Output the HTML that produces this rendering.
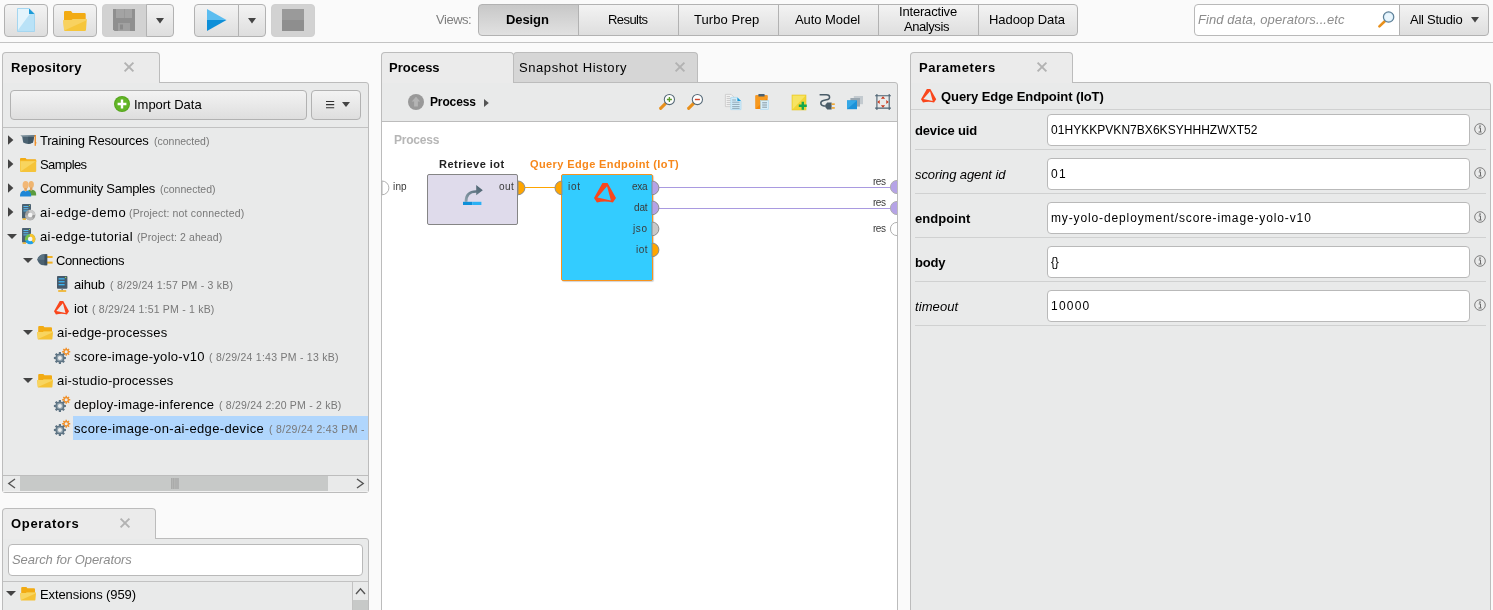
<!DOCTYPE html>
<html>
<head>
<meta charset="utf-8">
<title>AI Studio</title>
<style>
*{box-sizing:border-box;margin:0;padding:0}
html,body{width:1493px;height:610px;overflow:hidden;background:#fafafa}
body{position:relative;font-family:"Liberation Sans",sans-serif;font-size:13px;color:#000}
.abs{position:absolute}
.t{position:absolute;white-space:pre;line-height:16px;height:16px;will-change:transform}
.btn{position:absolute;border:1px solid #b2b2b2;border-radius:4px;background:linear-gradient(#f3f3f3,#dedede)}
.btn.dis{background:#d2d2d2;border-color:#d0d0d0}
.btn.sel{background:linear-gradient(#c8c8c8,#e1e1e1)}
.tab{position:absolute;background:#ebebeb;border:1px solid #bcbcbc;border-bottom:none;border-radius:4px 4px 0 0}
.tab.un{background:#d6d6d6}
.panel{position:absolute;background:#e9eaea;border:1px solid #bcbcbc;border-radius:0 3px 3px 3px}
.inp{position:absolute;background:#fff;border:1px solid #b9b9b9;border-radius:4px}
.sep{position:absolute;height:1px;background:#d0d1d1}
svg{position:absolute;overflow:visible}
</style>
</head>
<body>
<!-- TOP TOOLBAR -->
<div class="abs" style="left:0;top:42px;width:1493px;height:1px;background:#c3c3c3"></div>
<div class="btn" style="left:4px;top:4px;width:44px;height:33px"></div>
<div class="btn" style="left:53px;top:4px;width:44px;height:33px"></div>
<div class="btn dis" style="left:102px;top:4px;width:45px;height:33px;border-radius:4px 0 0 4px"></div>
<div class="btn" style="left:146px;top:4px;width:28px;height:33px;border-radius:0 4px 4px 0"></div>
<div class="btn" style="left:194px;top:4px;width:45px;height:33px;border-radius:4px 0 0 4px"></div>
<div class="btn" style="left:238px;top:4px;width:28px;height:33px;border-radius:0 4px 4px 0"></div>
<div class="btn dis" style="left:271px;top:4px;width:44px;height:33px"></div>
<svg style="left:17px;top:8px" width="18" height="24" viewBox="0 0 18 24"><path d="M0.5 0.5H12L17.5 6V23.5H0.5Z" fill="#b9e2f7" stroke="#a5d6f0" stroke-width="1"/><path d="M1 1H12L13.5 5L1 22Z" fill="#e3f4fc"/><path d="M12 0.5L17.5 6H12Z" fill="#1b9ad6"/></svg>
<svg style="left:63px;top:11px" width="24" height="20" viewBox="0 0 24 20"><path d="M1 1.2Q1 0 2.2 0H8L9.5 2H21.5Q22.7 2 22.7 3.2V12H1Z" fill="#f2ab13"/><path d="M0.3 10.2Q0 9 1.2 9H8.5L10 8H22.8Q24 8 23.7 9.2L23 18.8Q23 20 21.8 20H2.2Q1 20 1 18.8Z" fill="#f6c63c"/><path d="M0.3 10.2Q0 9 1.2 9H8.5L10 8H22.8Q24 8 23.7 9.2L1.2 19.5Z" fill="#f8d260"/></svg>
<svg style="left:113px;top:9px" width="22" height="22" viewBox="0 0 22 22"><path d="M0 0H22V22H1.5L0 20.5Z" fill="#8f8f8f"/><rect x="3" y="0" width="16" height="9" fill="#a3a3a3"/><rect x="11" y="0" width="1" height="9" fill="#999"/><rect x="5" y="14" width="12" height="8" fill="#a0a0a0"/><rect x="7" y="15.5" width="3" height="5" fill="#8a8a8a"/></svg>
<svg style="left:156px;top:18px" width="8" height="6" viewBox="0 0 8 6"><path d="M0 0H8L4 5.5Z" fill="#444"/></svg>
<svg style="left:207px;top:9px" width="20" height="22" viewBox="0 0 20 22"><path d="M0 0L19.5 11H0Z" fill="#5bbdf0"/><path d="M0 11H19.5L0 22Z" fill="#0e8fd8"/></svg>
<svg style="left:248px;top:18px" width="8" height="6" viewBox="0 0 8 6"><path d="M0 0H8L4 5.5Z" fill="#444"/></svg>
<svg style="left:282px;top:9px" width="22" height="22" viewBox="0 0 22 22"><rect width="22" height="11" fill="#9a9a9a"/><rect y="11" width="22" height="11" fill="#8e8e8e"/></svg>
<!-- VIEWS -->
<div class="btn sel" style="left:478px;top:4px;width:101px;height:32px;border-radius:4px 0 0 4px"></div>
<div class="btn" style="left:578px;top:4px;width:101px;height:32px;border-radius:0"></div>
<div class="btn" style="left:678px;top:4px;width:101px;height:32px;border-radius:0"></div>
<div class="btn" style="left:778px;top:4px;width:101px;height:32px;border-radius:0"></div>
<div class="btn" style="left:878px;top:4px;width:101px;height:32px;border-radius:0"></div>
<div class="btn" style="left:978px;top:4px;width:100px;height:32px;border-radius:0 4px 4px 0"></div>
<!-- SEARCH -->
<div class="inp" style="left:1194px;top:4px;width:206px;height:32px;border-radius:4px 0 0 4px"></div>
<div class="btn" style="left:1399px;top:4px;width:90px;height:32px;border-radius:0 4px 4px 0"></div>
<svg style="left:1471px;top:17px" width="8" height="6" viewBox="0 0 8 6"><path d="M0 0H8L4 5.5Z" fill="#444"/></svg>
<svg style="left:1378px;top:11.4px" width="17" height="17" viewBox="0 0 17 17"><path d="M6.8 10.2L1.4 15.4" stroke="#e8901c" stroke-width="2.6" stroke-linecap="round"/><circle cx="10.6" cy="6" r="5.2" fill="#d8eefb" stroke="#5d7f96" stroke-width="1.2"/><circle cx="10.6" cy="6" r="3.6" fill="#eaf6fd"/></svg>
<!-- REPOSITORY -->
<div class="panel" style="left:2px;top:82px;width:367px;height:411px;"></div>
<div class="tab" style="left:2px;top:52px;width:158px;height:31px;"></div>
<svg style="left:124px;top:62px" width="10" height="10" viewBox="0 0 10 10"><path d="M0.6 0.6L9.4 9.4M9.4 0.6L0.6 9.4" stroke="#b2b2b2" stroke-width="1.9" fill="none"/></svg>
<div class="btn" style="left:10px;top:90px;width:297px;height:30px;"></div>
<div class="btn" style="left:311px;top:90px;width:50px;height:30px;"></div>
<svg style="left:114px;top:96px" width="16" height="16" viewBox="0 0 16 16"><circle cx="8" cy="8" r="8" fill="#55a51c"/><circle cx="8" cy="8" r="7" fill="#62b526"/><path d="M8 3.6V12.4M3.6 8H12.4" stroke="#fff" stroke-width="2.4"/></svg>
<svg style="left:326px;top:101px" width="9" height="8" viewBox="0 0 9 8"><path d="M0 0.5H8.2M0 3.6H8.2M0 6.7H8.2" stroke="#333" stroke-width="1.1"/></svg>
<svg style="left:342px;top:102px" width="8" height="5" viewBox="0 0 8 5"><path d="M0 0H8L4 5Z" fill="#444"/></svg>
<div class="sep" style="left:3px;top:127px;width:365px;height:1px;background:#c2c2c2;"></div>
<div class="abs" style="left:73px;top:416px;width:295px;height:24px;background:#b0d6fd;"></div>
<svg style="left:7.7px;top:135px" width="6" height="10" viewBox="0 0 6 10"><path d="M0 0.2L5.4 5L0 9.8Z" fill="#444"/></svg>
<svg style="left:7.7px;top:159px" width="6" height="10" viewBox="0 0 6 10"><path d="M0 0.2L5.4 5L0 9.8Z" fill="#444"/></svg>
<svg style="left:7.7px;top:183px" width="6" height="10" viewBox="0 0 6 10"><path d="M0 0.2L5.4 5L0 9.8Z" fill="#444"/></svg>
<svg style="left:7.7px;top:207px" width="6" height="10" viewBox="0 0 6 10"><path d="M0 0.2L5.4 5L0 9.8Z" fill="#444"/></svg>
<svg style="left:19.8px;top:135px" width="17" height="11" viewBox="0 0 17 11"><path d="M0.3 0.6L16 0L14.6 1.8H2.2Z" fill="#5d7684"/><path d="M2.2 1.8H14L13 7.6Q8 10.2 3.2 7.6Z" fill="#4b6271"/><path d="M8.2 1.8H14L13 7.6Q10.6 8.8 8.2 9Z" fill="#3e5462"/><rect x="14.6" y="0" width="1.3" height="10.8" fill="#f08a1c"/><rect x="15.4" y="7" width="0.9" height="1.6" fill="#f08a1c"/></svg>
<svg style="left:19.8px;top:158px" width="17" height="14" viewBox="0 0 17 14"><path d="M0 1Q0 0 1 0H5.6L6.6 1.3H15.2Q16.2 1.3 16.2 2.3V4H0Z" fill="#f2ab13"/><path d="M0 2.6H16.2V13Q16.2 14 15.2 14H1Q0 14 0 13Z" fill="#f5c43a"/><path d="M0.6 3.2H15.6L0.6 13.4Z" fill="#f8d55f"/></svg>
<svg style="left:19.8px;top:181px" width="17" height="16" viewBox="0 0 17 16"><ellipse cx="11.2" cy="3.6" rx="2.7" ry="3.5" fill="#efb570"/><path d="M6.8 14.6Q6.4 9.6 9.6 8.8L11.2 9.6L12.8 8.8Q16.4 9.6 16.2 14.6Z" fill="#5b9b3e"/><rect x="10" y="6.4" width="2.4" height="2.8" fill="#e0a05c"/><ellipse cx="5.6" cy="4" rx="3" ry="3.9" fill="#f2b877"/><rect x="4.3" y="7" width="2.6" height="3" fill="#e3a463"/><path d="M0 15.4Q-0.2 10.6 3.6 9.4L5.6 10.4L7.6 9.4Q11.4 10.6 11.2 15.4Z" fill="#1e87d6"/></svg>
<svg style="left:19.9px;top:204px" width="16" height="17" viewBox="0 0 16 17"><rect x="2" y="0" width="9" height="14.6" rx="0.8" fill="#4b6171"/><rect x="3.4" y="2" width="5" height="1" fill="#58b8ec"/><rect x="3.4" y="4.2" width="5" height="1" fill="#58b8ec"/><rect x="3.4" y="6.4" width="5" height="1" fill="#58b8ec"/><rect x="9" y="1" width="1" height="1" fill="#8fd14f"/><rect x="2.6" y="14.4" width="3.4" height="1.4" fill="#f0b020"/><circle cx="10.2" cy="11" r="5.2" fill="#9d9d9d"/><path d="M10.2 11L15.399999999999999 11A5.2 5.2 0 0 0 8.6 6.05Z" fill="#c9c9c9"/><path d="M10.2 11L4.999999999999999 11.5A5.2 5.2 0 0 0 13.84 14.692Z" fill="#b5b5b5"/><circle cx="10.2" cy="11" r="2.3" fill="#f4f4f4"/></svg>
<svg style="left:6.5px;top:233.5px" width="10" height="5" viewBox="0 0 10 5"><path d="M0 0H10L5 5Z" fill="#444"/></svg>
<svg style="left:19.9px;top:228px" width="16" height="17" viewBox="0 0 16 17"><rect x="2" y="0" width="9" height="14.6" rx="0.8" fill="#4b6171"/><rect x="3.4" y="2" width="5" height="1" fill="#58b8ec"/><rect x="3.4" y="4.2" width="5" height="1" fill="#58b8ec"/><rect x="3.4" y="6.4" width="5" height="1" fill="#58b8ec"/><rect x="9" y="1" width="1" height="1" fill="#8fd14f"/><rect x="2.6" y="14.4" width="3.4" height="1.4" fill="#f0b020"/><circle cx="10.2" cy="11" r="5.2" fill="#1ea0e6"/><path d="M10.2 11L9.32 5.88A5.2 5.2 0 0 1 13.53 15.00Z" fill="#f7c42e"/><path d="M10.2 11L9.32 5.88A5.2 5.2 0 0 0 5.31 12.77Z" fill="#78c043"/><circle cx="10.2" cy="11" r="2.3" fill="#f4f4f4"/></svg>
<svg style="left:22.8px;top:257.5px" width="10" height="5" viewBox="0 0 10 5"><path d="M0 0H10L5 5Z" fill="#444"/></svg>
<svg style="left:37.2px;top:254.3px" width="16" height="12" viewBox="0 0 16 12"><rect x="9" y="2" width="6.6" height="2" fill="#f0b020"/><rect x="9" y="7.6" width="6.6" height="2" fill="#f0b020"/><path d="M10.2 0.3V11.3H6.6Q2.2 11.3 0.2 5.8Q2.2 0.3 6.6 0.3Z" fill="#4b6171"/><path d="M7.4 0.3H10.2V11.3H7.4Z" fill="#3c505e"/><path d="M0.2 5.8Q2.2 0.3 6.6 0.3H7.4V5.8Z" fill="#5a7282"/></svg>
<svg style="left:56.9px;top:276.1px" width="11" height="16" viewBox="0 0 11 16"><rect x="0" y="0" width="10.4" height="12.8" rx="0.8" fill="#46596a"/><rect x="1.6" y="2.2" width="6" height="1.3" fill="#3db5f2"/><rect x="1.6" y="5.1" width="6" height="1.3" fill="#3db5f2"/><rect x="1.6" y="8" width="6" height="1.3" fill="#3db5f2"/><rect x="8" y="0.9" width="1.2" height="1.2" fill="#8fd14f"/><rect x="4.4" y="12.8" width="1.6" height="1.6" fill="#7a8a96"/><rect x="1.2" y="14.2" width="8" height="1.6" fill="#f0b020"/></svg>
<svg style="left:54.2px;top:301.3px" width="16" height="14" viewBox="0 0 16 14"><path d="M5.78 0.00L9.22 0.00L15.00 10.34L12.86 13.40Q7.50 12.06 1.98 13.40L0.00 10.34ZM8.89 2.21L2.31 10.01L11.54 12.05Z" fill="#f9461c" fill-rule="evenodd"/></svg>
<svg style="left:23px;top:329.5px" width="10" height="5" viewBox="0 0 10 5"><path d="M0 0H10L5 5Z" fill="#444"/></svg>
<svg style="left:37.1px;top:326px" width="17" height="14" viewBox="0 0 17 14"><path d="M1.2 1Q1.2 0 2.2 0H6.4L7.4 1.3H14Q15 1.3 15 2.3V8H1.2Z" fill="#f2ab13"/><path d="M0.2 6.8Q0 6 0.9 6H5.8L6.8 5.4H15.2Q16.2 5.4 16 6.3L15.4 12.7Q15.3 13.6 14.4 13.6H1.7Q0.8 13.6 0.7 12.7Z" fill="#f5c235"/><path d="M0.2 6.8Q0 6 0.9 6H5.8L6.8 5.4H15.2Q16.2 5.4 16 6.3L1 13Z" fill="#f8d560"/></svg>
<svg style="left:53.9px;top:348px" width="17" height="17" viewBox="0 0 17 17"><path d="M16.24 3.08L16.24 4.52L15.01 4.53L14.70 5.27L15.56 6.14L14.54 7.16L13.67 6.30L12.93 6.61L12.92 7.84L11.48 7.84L11.47 6.61L10.73 6.30L9.86 7.16L8.84 6.14L9.70 5.27L9.39 4.53L8.16 4.52L8.16 3.08L9.39 3.07L9.70 2.33L8.84 1.46L9.86 0.44L10.73 1.30L11.47 0.99L11.48 -0.24L12.92 -0.24L12.93 0.99L13.67 1.30L14.54 0.44L15.56 1.46L14.70 2.33L15.01 3.07Z" fill="#f0902a"/><circle cx="12.2" cy="3.8" r="1.5" fill="#e9eaea"/><path d="M11.91 8.93L11.91 11.07L10.25 11.14L9.78 12.28L10.90 13.49L9.39 15.00L8.18 13.88L7.04 14.35L6.97 16.01L4.83 16.01L4.76 14.35L3.62 13.88L2.41 15.00L0.90 13.49L2.02 12.28L1.55 11.14L-0.11 11.07L-0.11 8.93L1.55 8.86L2.02 7.72L0.90 6.51L2.41 5.00L3.62 6.12L4.76 5.65L4.83 3.99L6.97 3.99L7.04 5.65L8.18 6.12L9.39 5.00L10.90 6.51L9.78 7.72L10.25 8.86Z" fill="#5d7383"/><circle cx="5.9" cy="10" r="3.2" fill="#8ea0ac"/><circle cx="5.9" cy="10" r="2" fill="#e9eaea"/></svg>
<svg style="left:23px;top:377.5px" width="10" height="5" viewBox="0 0 10 5"><path d="M0 0H10L5 5Z" fill="#444"/></svg>
<svg style="left:37.1px;top:374px" width="17" height="14" viewBox="0 0 17 14"><path d="M1.2 1Q1.2 0 2.2 0H6.4L7.4 1.3H14Q15 1.3 15 2.3V8H1.2Z" fill="#f2ab13"/><path d="M0.2 6.8Q0 6 0.9 6H5.8L6.8 5.4H15.2Q16.2 5.4 16 6.3L15.4 12.7Q15.3 13.6 14.4 13.6H1.7Q0.8 13.6 0.7 12.7Z" fill="#f5c235"/><path d="M0.2 6.8Q0 6 0.9 6H5.8L6.8 5.4H15.2Q16.2 5.4 16 6.3L1 13Z" fill="#f8d560"/></svg>
<svg style="left:53.9px;top:396px" width="17" height="17" viewBox="0 0 17 17"><path d="M16.24 3.08L16.24 4.52L15.01 4.53L14.70 5.27L15.56 6.14L14.54 7.16L13.67 6.30L12.93 6.61L12.92 7.84L11.48 7.84L11.47 6.61L10.73 6.30L9.86 7.16L8.84 6.14L9.70 5.27L9.39 4.53L8.16 4.52L8.16 3.08L9.39 3.07L9.70 2.33L8.84 1.46L9.86 0.44L10.73 1.30L11.47 0.99L11.48 -0.24L12.92 -0.24L12.93 0.99L13.67 1.30L14.54 0.44L15.56 1.46L14.70 2.33L15.01 3.07Z" fill="#f0902a"/><circle cx="12.2" cy="3.8" r="1.5" fill="#e9eaea"/><path d="M11.91 8.93L11.91 11.07L10.25 11.14L9.78 12.28L10.90 13.49L9.39 15.00L8.18 13.88L7.04 14.35L6.97 16.01L4.83 16.01L4.76 14.35L3.62 13.88L2.41 15.00L0.90 13.49L2.02 12.28L1.55 11.14L-0.11 11.07L-0.11 8.93L1.55 8.86L2.02 7.72L0.90 6.51L2.41 5.00L3.62 6.12L4.76 5.65L4.83 3.99L6.97 3.99L7.04 5.65L8.18 6.12L9.39 5.00L10.90 6.51L9.78 7.72L10.25 8.86Z" fill="#5d7383"/><circle cx="5.9" cy="10" r="3.2" fill="#8ea0ac"/><circle cx="5.9" cy="10" r="2" fill="#e9eaea"/></svg>
<svg style="left:53.9px;top:420px" width="17" height="17" viewBox="0 0 17 17"><path d="M16.24 3.08L16.24 4.52L15.01 4.53L14.70 5.27L15.56 6.14L14.54 7.16L13.67 6.30L12.93 6.61L12.92 7.84L11.48 7.84L11.47 6.61L10.73 6.30L9.86 7.16L8.84 6.14L9.70 5.27L9.39 4.53L8.16 4.52L8.16 3.08L9.39 3.07L9.70 2.33L8.84 1.46L9.86 0.44L10.73 1.30L11.47 0.99L11.48 -0.24L12.92 -0.24L12.93 0.99L13.67 1.30L14.54 0.44L15.56 1.46L14.70 2.33L15.01 3.07Z" fill="#f0902a"/><circle cx="12.2" cy="3.8" r="1.5" fill="#e9eaea"/><path d="M11.91 8.93L11.91 11.07L10.25 11.14L9.78 12.28L10.90 13.49L9.39 15.00L8.18 13.88L7.04 14.35L6.97 16.01L4.83 16.01L4.76 14.35L3.62 13.88L2.41 15.00L0.90 13.49L2.02 12.28L1.55 11.14L-0.11 11.07L-0.11 8.93L1.55 8.86L2.02 7.72L0.90 6.51L2.41 5.00L3.62 6.12L4.76 5.65L4.83 3.99L6.97 3.99L7.04 5.65L8.18 6.12L9.39 5.00L10.90 6.51L9.78 7.72L10.25 8.86Z" fill="#5d7383"/><circle cx="5.9" cy="10" r="3.2" fill="#8ea0ac"/><circle cx="5.9" cy="10" r="2" fill="#e9eaea"/></svg>
<div class="abs" style="left:3px;top:475px;width:365px;height:1px;background:#bdbdbd;"></div>
<div class="abs" style="left:20px;top:476px;width:308px;height:15px;background:#c7c9c8;"></div>
<div class="abs" style="left:3px;top:491px;width:365px;height:1px;background:#f2f2f2;"></div>
<svg style="left:8.4px;top:479px" width="8" height="9" viewBox="0 0 8 9"><path d="M7 0L0.8 4.5L7 9" stroke="#555" stroke-width="1.4" fill="none"/></svg>
<svg style="left:355.5px;top:479px" width="8" height="9" viewBox="0 0 8 9"><path d="M1 0L7.2 4.5L1 9" stroke="#555" stroke-width="1.4" fill="none"/></svg>
<svg style="left:171px;top:478px" width="8" height="11" viewBox="0 0 8 11"><path d="M0.9 0V11M2.9 0V11M5 0V11M7 0V11" stroke="#979797" stroke-width="1"/></svg>
<!-- OPERATORS -->
<div class="panel" style="left:2px;top:538px;width:367px;height:80px;"></div>
<div class="tab" style="left:2px;top:508px;width:154px;height:31px;"></div>
<svg style="left:120px;top:518px" width="10" height="10" viewBox="0 0 10 10"><path d="M0.6 0.6L9.4 9.4M9.4 0.6L0.6 9.4" stroke="#b2b2b2" stroke-width="1.9" fill="none"/></svg>
<div class="inp" style="left:8px;top:544px;width:355px;height:32px;"></div>
<div class="sep" style="left:3px;top:581px;width:365px;height:1px;background:#c2c2c2;"></div>
<div class="abs" style="left:352px;top:582px;width:1px;height:30px;background:#c2c2c2;"></div>
<div class="abs" style="left:353px;top:600px;width:15px;height:12px;background:#c7c9c8;"></div>
<svg style="left:6.1px;top:590.7px" width="10" height="5" viewBox="0 0 10 5"><path d="M0 0H10L5 5Z" fill="#444"/></svg>
<svg style="left:20px;top:587px" width="17" height="14" viewBox="0 0 17 14"><path d="M1.2 1Q1.2 0 2.2 0H6.4L7.4 1.3H14Q15 1.3 15 2.3V8H1.2Z" fill="#f2ab13"/><path d="M0.2 6.8Q0 6 0.9 6H5.8L6.8 5.4H15.2Q16.2 5.4 16 6.3L15.4 12.7Q15.3 13.6 14.4 13.6H1.7Q0.8 13.6 0.7 12.7Z" fill="#f5c235"/><path d="M0.2 6.8Q0 6 0.9 6H5.8L6.8 5.4H15.2Q16.2 5.4 16 6.3L1 13Z" fill="#f8d560"/></svg>
<svg style="left:356px;top:588px" width="9" height="7" viewBox="0 0 9 7"><path d="M0 6L4.5 0.8L9 6" stroke="#555" stroke-width="1.4" fill="none"/></svg>
<!-- PROCESS -->
<div class="panel" style="left:381px;top:82px;width:517px;height:540px;"></div>
<div class="tab un" style="left:513px;top:52px;width:185px;height:30px;"></div>
<div class="tab" style="left:381px;top:52px;width:133px;height:31px;"></div>
<svg style="left:675px;top:62px" width="10" height="10" viewBox="0 0 10 10"><path d="M0.6 0.6L9.4 9.4M9.4 0.6L0.6 9.4" stroke="#b2b2b2" stroke-width="1.9" fill="none"/></svg>
<div class="abs" style="left:382px;top:121px;width:515px;height:1px;background:#bcbcbc;"></div>
<div class="abs" style="left:382px;top:122px;width:515px;height:490px;background:#fff;"></div>
<svg style="left:408px;top:94px" width="16" height="16" viewBox="0 0 16 16"><circle cx="8" cy="8" r="8" fill="#999"/><path d="M8 2.8L12.2 7.4H9.9V12.6H6.1V7.4H3.8Z" fill="#b4b4b4"/></svg>
<svg style="left:484px;top:99px" width="5" height="8" viewBox="0 0 5 8"><path d="M0 0L4.8 4L0 8Z" fill="#555"/></svg>
<svg style="left:659.2px;top:94px" width="16" height="16" viewBox="0 0 16 16"><path d="M6.6 9.4L1.6 14.4" stroke="#e8901c" stroke-width="3" stroke-linecap="round"/><circle cx="10.4" cy="5.5" r="5.1" fill="#fdfdfd" stroke="#566a78" stroke-width="1.05"/><path d="M10.4 3V8M7.9 5.5H12.9" stroke="#5a9a2a" stroke-width="1.3"/></svg>
<svg style="left:687.2px;top:94px" width="16" height="16" viewBox="0 0 16 16"><path d="M6.6 9.4L1.6 14.4" stroke="#e8901c" stroke-width="3" stroke-linecap="round"/><circle cx="10.4" cy="5.5" r="5.1" fill="#fdfdfd" stroke="#566a78" stroke-width="1.05"/><path d="M7.9 5.5H12.9" stroke="#d0452a" stroke-width="1.4"/></svg>
<svg style="left:725px;top:94px" width="16" height="16" viewBox="0 0 16 16"><path d="M0.4 0.4H6.2L8.8 3V12.6H0.4Z" fill="#f3f3f3" stroke="#c4c4c4" stroke-width="0.7"/><path d="M1.6 2.6H5M1.6 4.6H7.4M1.6 6.6H7.4M1.6 8.6H7.4M1.6 10.6H7.4" stroke="#b4b4b4" stroke-width="0.7"/><path d="M5.8 3.4H12.4L16 7V15.6H5.8Z" fill="#d2ecf9" stroke="#a9d8f0" stroke-width="0.7"/><path d="M12.4 3.4L16 7H12.4Z" fill="#1b9ad6"/><path d="M7.2 6H11M7.2 8.2H14.6M7.2 10.4H14.6M7.2 12.6H14.6M7.2 14.4H14.6" stroke="#7f97a6" stroke-width="0.8"/></svg>
<svg style="left:754.6px;top:94.4px" width="14" height="16" viewBox="0 0 14 16"><rect x="0.4" y="1.2" width="12.2" height="13.8" rx="0.6" fill="#f5870a"/><path d="M0.6 14.8L12.4 4V1.4H0.6Z" fill="#f79a20"/><rect x="3.4" y="0" width="6.2" height="2.6" rx="0.6" fill="#4b6171"/><rect x="5.6" y="6.6" width="8" height="8.9" fill="#d6eefa" stroke="#a9d8f0" stroke-width="0.6"/><path d="M7.2 8.8H12M7.2 11H12M7.2 13.2H12" stroke="#7f8f9a" stroke-width="0.9"/></svg>
<svg style="left:792px;top:95px" width="15" height="16" viewBox="0 0 15 16"><rect x="0" y="0" width="14" height="15" fill="#f2d535"/><path d="M0.4 0.4H13.6L0.4 14.6Z" fill="#f7e463"/><rect x="0" y="0" width="14" height="15" fill="none" stroke="#e8c828" stroke-width="0.6"/><path d="M10.8 6.8V14.8M6.8 10.8H14.8" stroke="#18a84a" stroke-width="2.4"/></svg>
<svg style="left:819px;top:94px" width="16" height="16" viewBox="0 0 16 16"><path d="M0.6 0.8H7.4Q10.6 0.8 10.6 3.2Q10.6 5.4 7.4 5.8L4.4 6.4Q1.8 7 1.8 9Q1.8 11.6 5 12H7" fill="none" stroke="#4a5c68" stroke-width="1.5"/><path d="M6.6 10.4L8.2 8.6H12.6V15.4H8.2L6.6 13.6Z" fill="#4a5c68"/><rect x="12.6" y="9.4" width="3.2" height="1.5" fill="#f0a020"/><rect x="12.6" y="13.2" width="3.2" height="1.5" fill="#f0a020"/></svg>
<svg style="left:847px;top:96px" width="16" height="14" viewBox="0 0 16 14"><rect x="6.8" y="0" width="9.2" height="8.2" fill="#c3cacf"/><rect x="3.4" y="2" width="9.6" height="8.6" fill="#9aa7b0"/><rect x="0" y="4.4" width="10" height="8.8" fill="#1d92d8"/><path d="M0 4.4H10L0 13.2Z" fill="#35a8e6"/></svg>
<svg style="left:875px;top:94px" width="16" height="16" viewBox="0 0 16 16"><path d="M0.1 1.8H15.9M0.1 14.1H15.9M1.9 0.1V15.9M14.2 0.1V15.9" stroke="#4a6070" stroke-width="1.1" fill="none"/><path d="M8.0 2.3L5.9 4.7L10.1 4.7ZM8.0 13.7L10.1 11.3L5.9 11.3ZM2.3 8.0L4.7 5.9L4.7 10.1ZM13.7 8.0L11.3 10.1L11.3 5.9Z" fill="#c9391d"/></svg>
<div class="abs" style="left:525px;top:187px;width:30px;height:1px;background:#ffa500;"></div>
<div class="abs" style="left:659px;top:187px;width:232px;height:1px;background:#a99ae0;"></div>
<div class="abs" style="left:659px;top:208px;width:232px;height:1px;background:#a99ae0;"></div>
<div class="abs" style="left:427px;top:174px;width:91px;height:51px;background:#dfdbeb;border:1px solid #858585;border-radius:2px;"></div>
<svg style="left:462.8px;top:185px" width="20" height="20" viewBox="0 0 20 20"><defs><linearGradient id="rg" x1="0" y1="1" x2="1" y2="0"><stop offset="0" stop-color="#8fa3ae"/><stop offset="1" stop-color="#465c6a"/></linearGradient></defs><path d="M1.6 16.8Q1.6 5.2 13.2 5.2V0L19.8 5.2L13.2 10.2V7.8Q4.4 7.6 4.4 16.8Z" fill="url(#rg)"/><rect x="0" y="16.8" width="9.2" height="3.2" fill="#0d8fd8"/><rect x="9.2" y="16.8" width="9.2" height="3.2" fill="#2bb0f4"/></svg>
<div class="abs" style="left:561px;top:174px;width:91.5px;height:107px;background:#33ccff;border:1.4px solid #f7931e;border-radius:2px;box-shadow:1px 1px 1px rgba(0,0,0,0.18);"></div>
<svg style="left:594.4px;top:183px" width="22" height="20" viewBox="0 0 22 20"><path d="M8.47 0.00L13.53 0.00L22.00 14.98L18.85 19.40Q11.00 17.46 2.90 19.40L0.00 14.98ZM13.05 3.20L3.39 14.49L16.92 17.44Z" fill="#f9461c" fill-rule="evenodd"/></svg>
<svg style="left:518px;top:180.5px" width="7.9" height="13.8" viewBox="0 0 7.9 13.8"><path d="M0 0A6.9 6.9 0 0 1 0 13.8Z" fill="#ffa500" stroke="#8c8c8c" stroke-width="1"/></svg>
<svg style="left:554.5px;top:180.5px" width="7.9" height="13.8" viewBox="0 0 7.9 13.8"><path d="M6.9 0A6.9 6.9 0 0 0 6.9 13.8Z" fill="#ffa500" stroke="#8c8c8c" stroke-width="1"/></svg>
<svg style="left:652px;top:180.5px" width="7.9" height="13.8" viewBox="0 0 7.9 13.8"><path d="M0 0A6.9 6.9 0 0 1 0 13.8Z" fill="#b5a3e6" stroke="#8c8c8c" stroke-width="1"/></svg>
<svg style="left:652px;top:201.29999999999998px" width="7.9" height="13.8" viewBox="0 0 7.9 13.8"><path d="M0 0A6.9 6.9 0 0 1 0 13.8Z" fill="#b5a3e6" stroke="#8c8c8c" stroke-width="1"/></svg>
<svg style="left:652px;top:222.29999999999998px" width="7.9" height="13.8" viewBox="0 0 7.9 13.8"><path d="M0 0A6.9 6.9 0 0 1 0 13.8Z" fill="#c8c8c8" stroke="#8c8c8c" stroke-width="1"/></svg>
<svg style="left:652px;top:243.29999999999998px" width="7.9" height="13.8" viewBox="0 0 7.9 13.8"><path d="M0 0A6.9 6.9 0 0 1 0 13.8Z" fill="#ffa500" stroke="#8c8c8c" stroke-width="1"/></svg>
<svg style="left:382.4px;top:181.0px" width="7.9" height="13.8" viewBox="0 0 7.9 13.8"><path d="M0 0A6.9 6.9 0 0 1 0 13.8Z" fill="#fff" stroke="#b0b0b0" stroke-width="1"/></svg>
<div class="abs" style="left:885px;top:178px;width:12px;height:64px;overflow:hidden"><svg style="left:5px;top:2.4000000000000004px" width="14" height="14" viewBox="0 0 14 14"><circle cx="7" cy="7" r="6.6" fill="#b5a3e6" stroke="#b0b0b0" stroke-width="1"/></svg><svg style="left:5px;top:23.4px" width="14" height="14" viewBox="0 0 14 14"><circle cx="7" cy="7" r="6.6" fill="#b5a3e6" stroke="#b0b0b0" stroke-width="1"/></svg><svg style="left:5px;top:44.4px" width="14" height="14" viewBox="0 0 14 14"><circle cx="7" cy="7" r="6.6" fill="#fff" stroke="#b0b0b0" stroke-width="1"/></svg></div>
<!-- PARAMETERS -->
<div class="panel" style="left:910px;top:82px;width:581px;height:540px;"></div>
<div class="tab" style="left:910px;top:52px;width:163px;height:31px;"></div>
<svg style="left:1037px;top:62px" width="10" height="10" viewBox="0 0 10 10"><path d="M0.6 0.6L9.4 9.4M9.4 0.6L0.6 9.4" stroke="#b2b2b2" stroke-width="1.9" fill="none"/></svg>
<svg style="left:921px;top:89.4px" width="16" height="14" viewBox="0 0 16 14"><path d="M5.85 0.00L9.35 0.00L15.20 10.34L13.03 13.40Q7.60 12.06 2.01 13.40L0.00 10.34ZM9.01 2.21L2.34 10.01L11.69 12.05Z" fill="#f9461c" fill-rule="evenodd"/></svg>
<div class="sep" style="left:911px;top:109px;width:579px;height:1px;"></div>
<div class="inp" style="left:1047px;top:114px;width:423px;height:32px;"></div>
<div class="sep" style="left:915px;top:149px;width:571px;height:1px;"></div>
<svg style="left:1473.5px;top:123.0px" width="12" height="12" viewBox="0 0 12 12"><circle cx="6" cy="6" r="5.3" fill="none" stroke="#777" stroke-width="0.95"/><path d="M4.8 4.9H6.5V8.8M4.6 9H7.6" stroke="#6a6a6a" stroke-width="1" fill="none"/><circle cx="6" cy="3.1" r="0.85" fill="#6a6a6a"/></svg>
<div class="inp" style="left:1047px;top:158px;width:423px;height:32px;"></div>
<div class="sep" style="left:915px;top:193px;width:571px;height:1px;"></div>
<svg style="left:1473.5px;top:167.0px" width="12" height="12" viewBox="0 0 12 12"><circle cx="6" cy="6" r="5.3" fill="none" stroke="#777" stroke-width="0.95"/><path d="M4.8 4.9H6.5V8.8M4.6 9H7.6" stroke="#6a6a6a" stroke-width="1" fill="none"/><circle cx="6" cy="3.1" r="0.85" fill="#6a6a6a"/></svg>
<div class="inp" style="left:1047px;top:202px;width:423px;height:32px;"></div>
<div class="sep" style="left:915px;top:237px;width:571px;height:1px;"></div>
<svg style="left:1473.5px;top:211.0px" width="12" height="12" viewBox="0 0 12 12"><circle cx="6" cy="6" r="5.3" fill="none" stroke="#777" stroke-width="0.95"/><path d="M4.8 4.9H6.5V8.8M4.6 9H7.6" stroke="#6a6a6a" stroke-width="1" fill="none"/><circle cx="6" cy="3.1" r="0.85" fill="#6a6a6a"/></svg>
<div class="inp" style="left:1047px;top:246px;width:423px;height:32px;"></div>
<div class="sep" style="left:915px;top:281px;width:571px;height:1px;"></div>
<svg style="left:1473.5px;top:255.0px" width="12" height="12" viewBox="0 0 12 12"><circle cx="6" cy="6" r="5.3" fill="none" stroke="#777" stroke-width="0.95"/><path d="M4.8 4.9H6.5V8.8M4.6 9H7.6" stroke="#6a6a6a" stroke-width="1" fill="none"/><circle cx="6" cy="3.1" r="0.85" fill="#6a6a6a"/></svg>
<div class="inp" style="left:1047px;top:290px;width:423px;height:32px;"></div>
<div class="sep" style="left:915px;top:325px;width:571px;height:1px;"></div>
<svg style="left:1473.5px;top:299.0px" width="12" height="12" viewBox="0 0 12 12"><circle cx="6" cy="6" r="5.3" fill="none" stroke="#777" stroke-width="0.95"/><path d="M4.8 4.9H6.5V8.8M4.6 9H7.6" stroke="#6a6a6a" stroke-width="1" fill="none"/><circle cx="6" cy="3.1" r="0.85" fill="#6a6a6a"/></svg>
<!-- TEXTS -->
<div class="t" style="font-size:13px;left:436.0px;top:12.0px;color:#808080;letter-spacing:-0.47px;">Views:</div>
<div class="t" style="font-size:13px;font-weight:bold;left:505.9px;top:12.0px;color:#000;letter-spacing:-0.09px;">Design</div>
<div class="t" style="font-size:13px;left:607.7px;top:12.0px;color:#000;letter-spacing:-0.56px;">Results</div>
<div class="t" style="font-size:13px;left:694.4px;top:12.0px;color:#000;letter-spacing:0.07px;">Turbo Prep</div>
<div class="t" style="font-size:13px;left:795.4px;top:12.0px;color:#000;letter-spacing:-0.06px;">Auto Model</div>
<div class="t" style="font-size:13px;left:898.6px;top:4.0px;color:#000;letter-spacing:-0.18px;">Interactive</div>
<div class="t" style="font-size:13px;left:904.4px;top:19.0px;color:#000;letter-spacing:-0.43px;">Analysis</div>
<div class="t" style="font-size:13px;left:989.4px;top:12.0px;color:#000;letter-spacing:-0.06px;">Hadoop Data</div>
<div class="t" style="font-size:13px;font-style:italic;left:1198.1px;top:12.0px;color:#8c8c8c;letter-spacing:0.08px;">Find data, operators...etc</div>
<div class="t" style="font-size:13px;left:1410.0px;top:12.0px;color:#000;letter-spacing:-0.25px;">All Studio</div>
<div class="t" style="font-size:13px;font-weight:bold;left:10.9px;top:60.0px;color:#000;letter-spacing:0.28px;">Repository</div>
<div class="t" style="font-size:13px;left:133.8px;top:97.0px;color:#000;letter-spacing:-0.03px;">Import Data</div>
<div class="t" style="font-size:13px;left:39.7px;top:133.0px;color:#000;letter-spacing:-0.21px;">Training Resources</div>
<div class="t" style="font-size:10.5px;left:153.8px;top:132.5px;color:#787878;">(connected)</div>
<div class="t" style="font-size:13px;left:39.7px;top:157.0px;color:#000;letter-spacing:-0.58px;">Samples</div>
<div class="t" style="font-size:13px;left:39.7px;top:181.0px;color:#000;letter-spacing:-0.30px;">Community Samples</div>
<div class="t" style="font-size:10.5px;left:159.8px;top:180.5px;color:#787878;letter-spacing:0.01px;">(connected)</div>
<div class="t" style="font-size:13px;left:39.7px;top:205.0px;color:#000;letter-spacing:0.49px;">ai-edge-demo</div>
<div class="t" style="font-size:10.5px;left:129.2px;top:204.5px;color:#787878;letter-spacing:0.16px;">(Project: not connected)</div>
<div class="t" style="font-size:13px;left:39.7px;top:229.0px;color:#000;letter-spacing:0.39px;">ai-edge-tutorial</div>
<div class="t" style="font-size:10.5px;left:136.5px;top:228.5px;color:#787878;letter-spacing:0.10px;">(Project: 2 ahead)</div>
<div class="t" style="font-size:13px;left:56.4px;top:253.0px;color:#000;letter-spacing:-0.38px;">Connections</div>
<div class="t" style="font-size:13px;left:73.6px;top:277.0px;color:#000;letter-spacing:-0.20px;">aihub</div>
<div class="t" style="font-size:10.5px;left:109.5px;top:276.5px;color:#787878;letter-spacing:0.24px;">( 8/29/24 1:57 PM - 3 kB)</div>
<div class="t" style="font-size:13px;left:73.6px;top:301.0px;color:#000;letter-spacing:-0.02px;">iot</div>
<div class="t" style="font-size:10.5px;left:91.8px;top:300.5px;color:#787878;letter-spacing:0.21px;">( 8/29/24 1:51 PM - 1 kB)</div>
<div class="t" style="font-size:13px;left:56.7px;top:325.0px;color:#000;letter-spacing:0.20px;">ai-edge-processes</div>
<div class="t" style="font-size:13px;left:73.7px;top:349.0px;color:#000;letter-spacing:0.29px;">score-image-yolo-v10</div>
<div class="t" style="font-size:10.5px;left:209.4px;top:348.5px;color:#787878;letter-spacing:0.25px;">( 8/29/24 1:43 PM - 13 kB)</div>
<div class="t" style="font-size:13px;left:56.7px;top:373.0px;color:#000;letter-spacing:0.20px;">ai-studio-processes</div>
<div class="t" style="font-size:13px;left:73.7px;top:397.0px;color:#000;letter-spacing:0.20px;">deploy-image-inference</div>
<div class="t" style="font-size:10.5px;left:218.8px;top:396.5px;color:#787878;letter-spacing:0.21px;">( 8/29/24 2:20 PM - 2 kB)</div>
<div class="t" style="font-size:13px;left:73.7px;top:421.0px;color:#000;letter-spacing:0.35px;">score-image-on-ai-edge-device</div>
<div class="t" style="font-size:10.5px;left:268.9px;top:420.5px;color:#787878;letter-spacing:0.31px;width:98.6px;overflow:hidden;">( 8/29/24 2:43 PM - 2 kB)</div>
<div class="t" style="font-size:13px;font-weight:bold;left:10.5px;top:516.0px;color:#000;letter-spacing:0.69px;">Operators</div>
<div class="t" style="font-size:13px;font-style:italic;left:11.9px;top:552.0px;color:#8c8c8c;letter-spacing:-0.08px;">Search for Operators</div>
<div class="t" style="font-size:13px;left:39.8px;top:587.0px;color:#000;letter-spacing:-0.10px;">Extensions (959)</div>
<div class="t" style="font-size:13px;font-weight:bold;left:389.4px;top:60.0px;color:#000;">Process</div>
<div class="t" style="font-size:13px;left:519.2px;top:60.0px;color:#000;letter-spacing:0.57px;">Snapshot History</div>
<div class="t" style="font-size:12px;font-weight:bold;left:429.7px;top:94.0px;color:#000;letter-spacing:-0.13px;">Process</div>
<div class="t" style="font-size:12px;font-weight:bold;left:394.1px;top:132.0px;color:#b6b6b6;letter-spacing:-0.23px;">Process</div>
<div class="t" style="font-size:11px;font-weight:bold;left:438.6px;top:156.0px;color:#222;letter-spacing:0.48px;">Retrieve iot</div>
<div class="t" style="font-size:11px;font-weight:bold;left:530.4px;top:156.0px;color:#f7871a;letter-spacing:0.39px;">Query Edge Endpoint (IoT)</div>
<div class="t" style="font-size:10px;left:393.2px;top:179.0px;color:#3a3a3a;letter-spacing:0.17px;">inp</div>
<div class="t" style="font-size:10px;left:498.6px;top:179.0px;color:#3a3a3a;letter-spacing:0.45px;">out</div>
<div class="t" style="font-size:10px;left:567.8px;top:179.0px;color:#3a3a3a;letter-spacing:0.72px;">iot</div>
<div class="t" style="font-size:10px;left:631.8px;top:179.0px;color:#3a3a3a;letter-spacing:-0.26px;">exa</div>
<div class="t" style="font-size:10px;left:633.8px;top:200.0px;color:#3a3a3a;letter-spacing:-0.15px;">dat</div>
<div class="t" style="font-size:10px;left:633.4px;top:221.0px;color:#3a3a3a;letter-spacing:0.60px;">jso</div>
<div class="t" style="font-size:10px;left:635.8px;top:242.0px;color:#3a3a3a;letter-spacing:0.52px;">iot</div>
<div class="t" style="font-size:10px;left:872.7px;top:174.0px;color:#3a3a3a;letter-spacing:-0.50px;">res</div>
<div class="t" style="font-size:10px;left:872.7px;top:195.0px;color:#3a3a3a;letter-spacing:-0.50px;">res</div>
<div class="t" style="font-size:10px;left:872.7px;top:221.0px;color:#3a3a3a;letter-spacing:-0.50px;">res</div>
<div class="t" style="font-size:13px;font-weight:bold;left:918.7px;top:60.0px;color:#000;letter-spacing:0.60px;">Parameters</div>
<div class="t" style="font-size:13px;font-weight:bold;left:940.8px;top:89.0px;color:#000;letter-spacing:-0.08px;">Query Edge Endpoint (IoT)</div>
<div class="t" style="font-size:13px;font-weight:bold;left:914.7px;top:123.0px;color:#000;letter-spacing:-0.15px;">device uid</div>
<div class="t" style="font-size:13px;font-style:italic;left:915.4px;top:167.0px;color:#000;letter-spacing:-0.09px;">scoring agent id</div>
<div class="t" style="font-size:13px;font-weight:bold;left:914.8px;top:211.0px;color:#000;letter-spacing:0.06px;">endpoint</div>
<div class="t" style="font-size:13px;font-weight:bold;left:914.8px;top:255.0px;color:#000;letter-spacing:-0.19px;">body</div>
<div class="t" style="font-size:13px;font-style:italic;left:914.8px;top:299.0px;color:#000;letter-spacing:0.09px;">timeout</div>
<div class="t" style="font-size:12px;left:1050.8px;top:122.0px;color:#000;letter-spacing:0.04px;">01HYKKPVKN7BX6KSYHHHZWXT52</div>
<div class="t" style="font-size:12px;left:1050.8px;top:166.0px;color:#000;letter-spacing:1.40px;">01</div>
<div class="t" style="font-size:12px;left:1050.7px;top:210.0px;color:#000;letter-spacing:0.87px;">my-yolo-deployment/score-image-yolo-v10</div>
<div class="t" style="font-size:12px;left:1050.7px;top:254.0px;color:#000;letter-spacing:-0.22px;">{}</div>
<div class="t" style="font-size:12px;left:1051.3px;top:298.0px;color:#000;letter-spacing:1.23px;">10000</div>
</body>
</html>
